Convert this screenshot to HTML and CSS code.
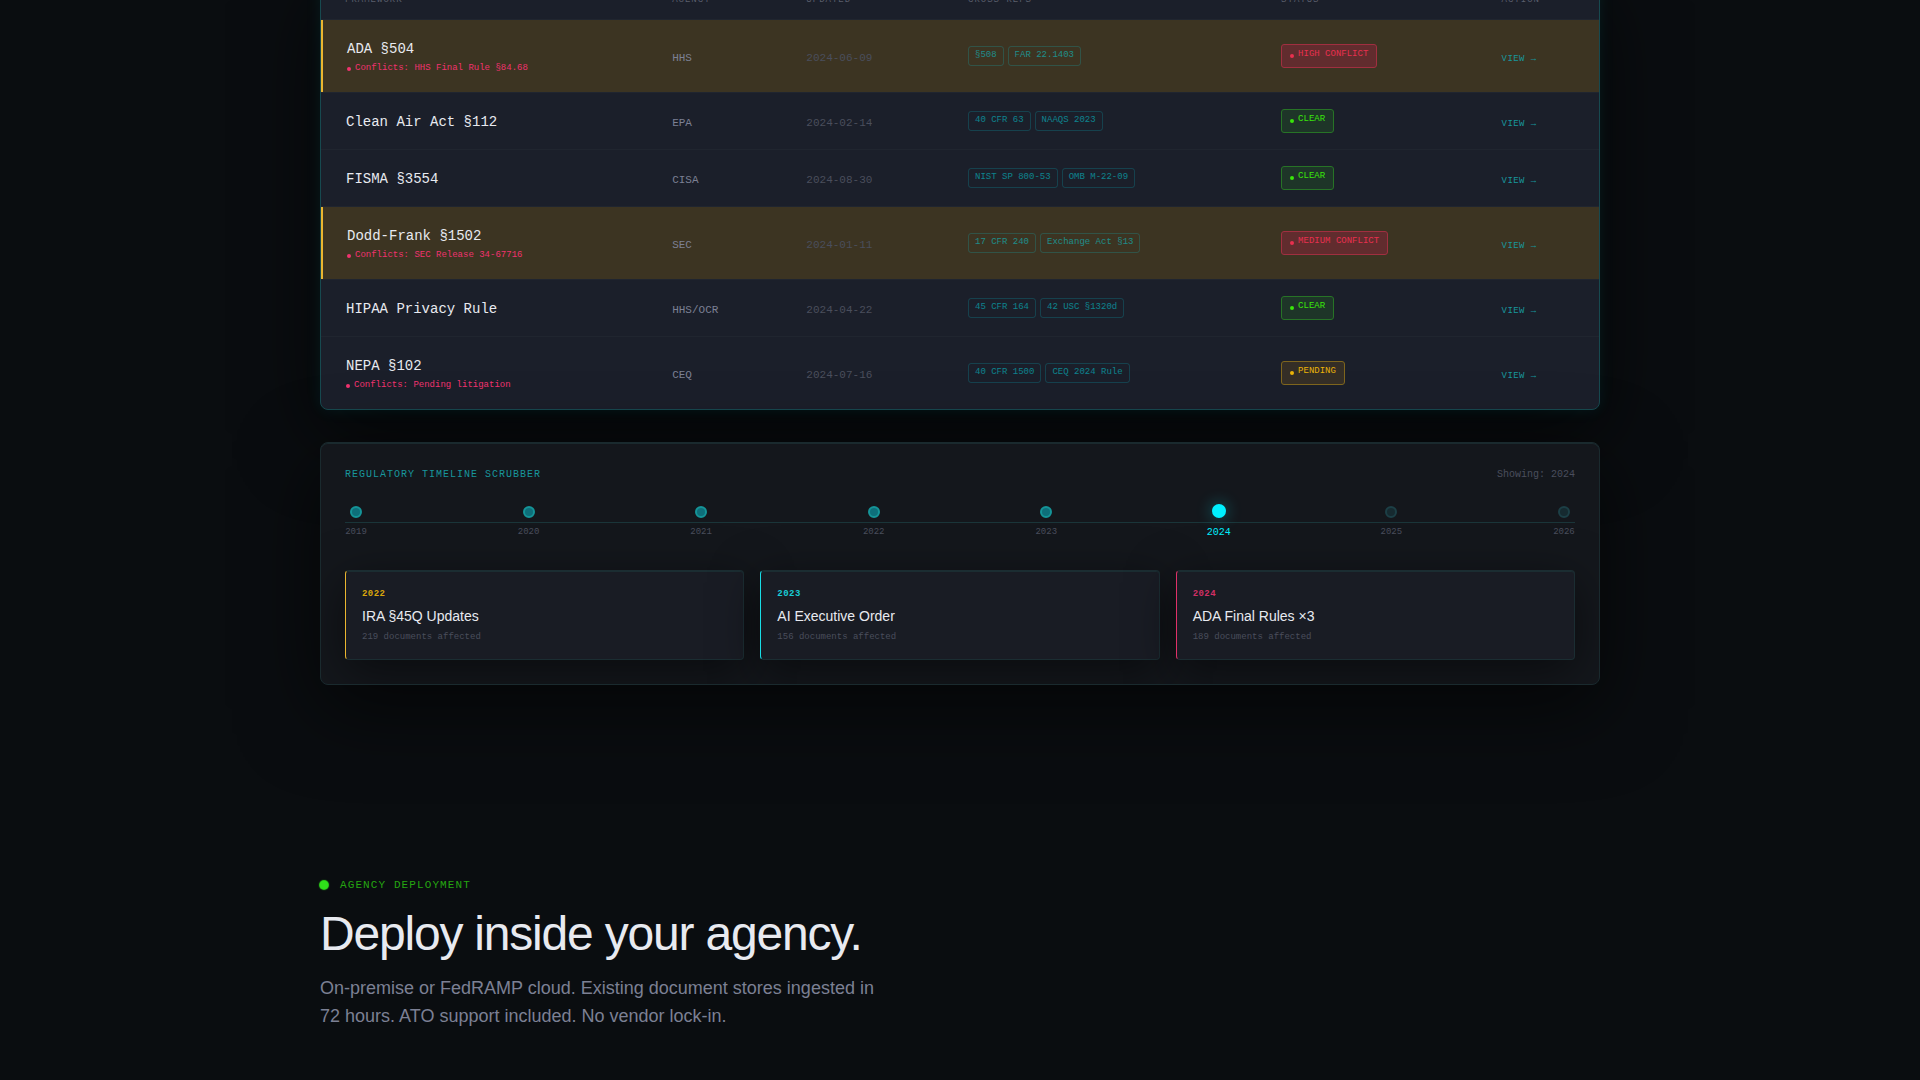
FILE: index.html
```html
<!DOCTYPE html>
<html lang="en">
<head>
    <meta charset="UTF-8">
    <meta name="viewport" content="width=device-width, initial-scale=1.0">
    <title>Regulatory Frameworks</title>
    <link rel="stylesheet" href="styles.css">
</head>
<body>
    <main class="container">
        <section class="panel frameworks">
            <table class="framework-table">
                <colgroup>
                    <col class="col-framework">
                    <col class="col-agency">
                    <col class="col-updated">
                    <col class="col-refs">
                    <col class="col-status">
                    <col class="col-action">
                </colgroup>
                <thead>
                    <tr>
                        <th>Framework</th>
                        <th>Agency</th>
                        <th>Updated</th>
                        <th>Cross-Refs</th>
                        <th>Status</th>
                        <th>Action</th>
                    </tr>
                </thead>
                <tbody>
                    <tr class="flagged">
                        <td>
                            <span class="name">ADA §504</span>
                            <div class="conflict"><span class="dot"></span>Conflicts: HHS Final Rule §84.68</div>
                        </td>
                        <td><span class="agency">HHS</span></td>
                        <td><span class="date">2024-06-09</span></td>
                        <td><div class="refs"><span class="ref">§508</span><span class="ref">FAR 22.1403</span></div></td>
                        <td><div class="refs"><span class="badge badge-conflict"><span class="dot"></span>HIGH CONFLICT</span></div></td>
                        <td><a href="#" class="view">VIEW →</a></td>
                    </tr>
                    <tr>
                        <td><span class="name">Clean Air Act §112</span></td>
                        <td><span class="agency">EPA</span></td>
                        <td><span class="date">2024-02-14</span></td>
                        <td><div class="refs"><span class="ref">40 CFR 63</span><span class="ref">NAAQS 2023</span></div></td>
                        <td><div class="refs"><span class="badge badge-clear"><span class="dot"></span>CLEAR</span></div></td>
                        <td><a href="#" class="view">VIEW →</a></td>
                    </tr>
                    <tr>
                        <td><span class="name">FISMA §3554</span></td>
                        <td><span class="agency">CISA</span></td>
                        <td><span class="date">2024-08-30</span></td>
                        <td><div class="refs"><span class="ref">NIST SP 800-53</span><span class="ref">OMB M-22-09</span></div></td>
                        <td><div class="refs"><span class="badge badge-clear"><span class="dot"></span>CLEAR</span></div></td>
                        <td><a href="#" class="view">VIEW →</a></td>
                    </tr>
                    <tr class="flagged">
                        <td>
                            <span class="name">Dodd-Frank §1502</span>
                            <div class="conflict"><span class="dot"></span>Conflicts: SEC Release 34-67716</div>
                        </td>
                        <td><span class="agency">SEC</span></td>
                        <td><span class="date">2024-01-11</span></td>
                        <td><div class="refs"><span class="ref">17 CFR 240</span><span class="ref">Exchange Act §13</span></div></td>
                        <td><div class="refs"><span class="badge badge-conflict"><span class="dot"></span>MEDIUM CONFLICT</span></div></td>
                        <td><a href="#" class="view">VIEW →</a></td>
                    </tr>
                    <tr>
                        <td><span class="name">HIPAA Privacy Rule</span></td>
                        <td><span class="agency">HHS/OCR</span></td>
                        <td><span class="date">2024-04-22</span></td>
                        <td><div class="refs"><span class="ref">45 CFR 164</span><span class="ref">42 USC §1320d</span></div></td>
                        <td><div class="refs"><span class="badge badge-clear"><span class="dot"></span>CLEAR</span></div></td>
                        <td><a href="#" class="view">VIEW →</a></td>
                    </tr>
                    <tr>
                        <td>
                            <span class="name">NEPA §102</span>
                            <div class="conflict"><span class="dot"></span>Conflicts: Pending litigation</div>
                        </td>
                        <td><span class="agency">CEQ</span></td>
                        <td><span class="date">2024-07-16</span></td>
                        <td><div class="refs"><span class="ref">40 CFR 1500</span><span class="ref">CEQ 2024 Rule</span></div></td>
                        <td><div class="refs"><span class="badge badge-pending"><span class="dot"></span>PENDING</span></div></td>
                        <td><a href="#" class="view">VIEW →</a></td>
                    </tr>
                </tbody>
            </table>
        </section>

        <section class="panel timeline">
            <div class="timeline-header">
                <h3>Regulatory Timeline Scrubber</h3>
                <span class="showing">Showing: 2024</span>
            </div>

            <div class="track">
                <button class="stop past"><span class="marker"></span>2019</button>
                <button class="stop past"><span class="marker"></span>2020</button>
                <button class="stop past"><span class="marker"></span>2021</button>
                <button class="stop past"><span class="marker"></span>2022</button>
                <button class="stop past"><span class="marker"></span>2023</button>
                <button class="stop active"><span class="marker"></span>2024</button>
                <button class="stop"><span class="marker"></span>2025</button>
                <button class="stop"><span class="marker"></span>2026</button>
            </div>

            <div class="events">
                <article class="event amber">
                    <div class="event-year">2022</div>
                    <h4>IRA §45Q Updates</h4>
                    <p>219 documents affected</p>
                </article>
                <article class="event cyan">
                    <div class="event-year">2023</div>
                    <h4>AI Executive Order</h4>
                    <p>156 documents affected</p>
                </article>
                <article class="event pink">
                    <div class="event-year">2024</div>
                    <h4>ADA Final Rules ×3</h4>
                    <p>189 documents affected</p>
                </article>
            </div>
        </section>

        <section class="deploy">
            <div class="eyebrow"><span class="eyebrow-dot"></span>Agency Deployment</div>
            <h2>Deploy inside your agency.</h2>
            <p>On-premise or FedRAMP cloud. Existing document stores ingested in 72 hours. ATO support included. No vendor lock-in.</p>
        </section>
    </main>
</body>
</html>
```
FILE: styles.css
```css
:root {
    --bg: #0a0d10;
    --panel: #1b1f2a;
    --cyan: #00f0ff;
    --teal: #18969c;
    --green: #39e609;
    --amber: #eab308;
    --pink: #f0326e;
    --text: #e8eaf0;
    --muted: #7c8094;
    --dim: #4a4e5c;
    --mono: "Liberation Mono", "Courier New", monospace;
}

* {
    box-sizing: border-box;
}

body {
    margin: 0;
    background-color: var(--bg);
    color: var(--text);
    font-family: "Liberation Sans", Arial, sans-serif;
    font-size: 16px;
    line-height: 24px;
    overflow: hidden;
}

h2, h3, h4, p {
    margin: 0;
    font-weight: 400;
}

.container {
    max-width: 1280px;
    margin: 0 auto;
}

.panel {
    border-radius: 8px;
    overflow: hidden;
}

/* Framework table */
.frameworks {
    margin-top: -24px;
    background-color: var(--panel);
    border: 1px solid #17494f;
    box-shadow: 0 0 16px rgba(0, 240, 255, 0.08), 0 24px 80px rgba(0, 0, 0, 0.6);
}

.framework-table {
    width: 100%;
    table-layout: fixed;
    border-collapse: collapse;
}

.col-framework { width: 25.6%; }
.col-agency { width: 10.5%; }
.col-updated { width: 12.65%; }
.col-refs { width: 24.5%; }
.col-status { width: 17.25%; }
.col-action { width: 9.5%; }

.framework-table th {
    padding: 14px 24px 10px;
    font-family: var(--mono);
    font-size: 9px;
    font-weight: 400;
    line-height: 18px;
    letter-spacing: 1px;
    text-align: left;
    text-transform: uppercase;
    color: #5a5e6c;
}

.framework-table td {
    padding: 16px 24px;
    border-top: 1px solid #20252f;
    vertical-align: middle;
}

.framework-table td:first-child {
    padding-left: 25px;
}

.framework-table .flagged td {
    background-color: #3c3422;
}

.framework-table .flagged td:first-child {
    box-shadow: inset 2px 0 0 #eab630;
    padding-left: 26px;
}

.name,
.agency,
.date,
.view {
    font-family: var(--mono);
    line-height: 16px;
}

.name {
    font-size: 14px;
}

.conflict {
    display: flex;
    align-items: center;
    gap: 4px;
    font-family: var(--mono);
    font-size: 9px;
    line-height: 16px;
    color: var(--pink);
}

.dot {
    width: 4px;
    height: 4px;
    margin-top: 2px;
    border-radius: 50%;
    background-color: currentColor;
}

.agency {
    font-size: 11px;
    color: var(--muted);
}

.date {
    font-size: 11px;
    color: var(--dim);
}

.refs {
    display: flex;
    align-items: center;
    gap: 4px;
}

.ref {
    padding: 3px 6px 4px;
    border: 1px solid rgba(0, 240, 255, 0.17);
    border-radius: 3px;
    font-family: var(--mono);
    font-size: 9px;
    line-height: 11px;
    color: rgba(0, 224, 235, 0.52);
}

.badge {
    display: flex;
    align-items: center;
    gap: 4px;
    padding: 4px 8px 7px;
    border: 1px solid;
    border-radius: 3px;
    font-family: var(--mono);
    font-size: 9px;
    line-height: 11px;
}

.badge-conflict {
    color: #e8304f;
    background-color: #612c2e;
    border-color: #a02f40;
}

.badge-clear {
    color: var(--green);
    background-color: #1e3528;
    border-color: #277326;
}

.badge-pending {
    color: var(--amber);
    background-color: #342e26;
    border-color: #7e651d;
}

.view {
    font-size: 9px;
    letter-spacing: 0.05em;
    color: var(--teal);
    text-decoration: none;
}

/* Timeline */
.timeline {
    margin-top: 32px;
    padding: 24px;
    background-color: #14171c;
    border: 1px solid #1a2a2e;
    box-shadow: inset 0 1px 0 #1a2a2e, 0 24px 80px rgba(0, 0, 0, 0.6);
}

.timeline-header {
    display: flex;
    justify-content: space-between;
    font-family: var(--mono);
    font-size: 10px;
    line-height: 15px;
}

.timeline-header h3 {
    font-size: 10px;
    letter-spacing: 1px;
    text-transform: uppercase;
    color: var(--teal);
}

.showing {
    color: var(--dim);
}

.track {
    display: flex;
    justify-content: space-between;
    margin-top: 22px;
    background: linear-gradient(#1a3539, #1a3539) 0 18px / 100% 1px no-repeat;
}

.stop {
    display: flex;
    flex-direction: column;
    align-items: center;
    gap: 8px;
    width: 22px;
    padding: 0;
    border: 0;
    background: none;
    font-family: var(--mono);
    font-size: 9px;
    line-height: 12px;
    white-space: nowrap;
    color: var(--dim);
    cursor: pointer;
}

.marker {
    width: 12px;
    height: 12px;
    margin-top: 2px;
    border: 2px solid #1c3f46;
    border-radius: 50%;
    background-color: #162a30;
}

.past .marker {
    border-color: #159498;
    background-color: #0e6f7a;
}

.active {
    font-size: 10px;
    line-height: 14px;
    color: var(--cyan);
}

.active .marker {
    width: 14px;
    height: 14px;
    margin-top: 0;
    border: 0;
    background-color: var(--cyan);
    box-shadow: 0 0 16px rgba(0, 240, 255, 0.4);
}

.events {
    display: grid;
    grid-template-columns: repeat(3, 1fr);
    gap: 16px;
    margin-top: 30px;
}

.event {
    padding: 17px 16px 15px;
    background-color: #191c24;
    border: 1px solid #1b2d32;
    border-radius: 4px;
    box-shadow: inset 0 1px 0 #1b2d32, 0 12px 48px rgba(0, 0, 0, 0.5);
}

.event-year {
    font-family: var(--mono);
    font-size: 9px;
    font-weight: 700;
    line-height: 12px;
    letter-spacing: 0.05em;
}

.event h4 {
    margin-top: 4px;
    font-size: 14px;
}

.event p {
    margin-top: 2px;
    font-family: var(--mono);
    font-size: 9px;
    line-height: 14px;
    color: var(--dim);
}

.amber { border-left-color: #eab630; }
.amber .event-year { color: #d9a60c; }
.cyan { border-left-color: #18dde6; }
.cyan .event-year { color: #18cdd6; }
.pink { border-left-color: #e03068; }
.pink .event-year { color: #d02f64; }

/* Deployment */
.deploy {
    padding-top: 192px;
}

.eyebrow {
    display: flex;
    align-items: center;
    gap: 12px;
    font-family: var(--mono);
    font-size: 11px;
    line-height: 16px;
    letter-spacing: 0.1em;
    text-transform: uppercase;
    color: #25a510;
}

.eyebrow-dot {
    width: 8px;
    height: 8px;
    border-radius: 50%;
    background-color: #2fe01a;
    box-shadow: 0 0 1px 1px #2fe01a;
}

.deploy h2 {
    margin-top: 16px;
    font-size: 48px;
    line-height: 50px;
    letter-spacing: -0.025em;
}

.deploy p {
    max-width: 560px;
    margin-top: 15px;
    font-size: 18px;
    line-height: 28px;
    color: var(--muted);
}
```
